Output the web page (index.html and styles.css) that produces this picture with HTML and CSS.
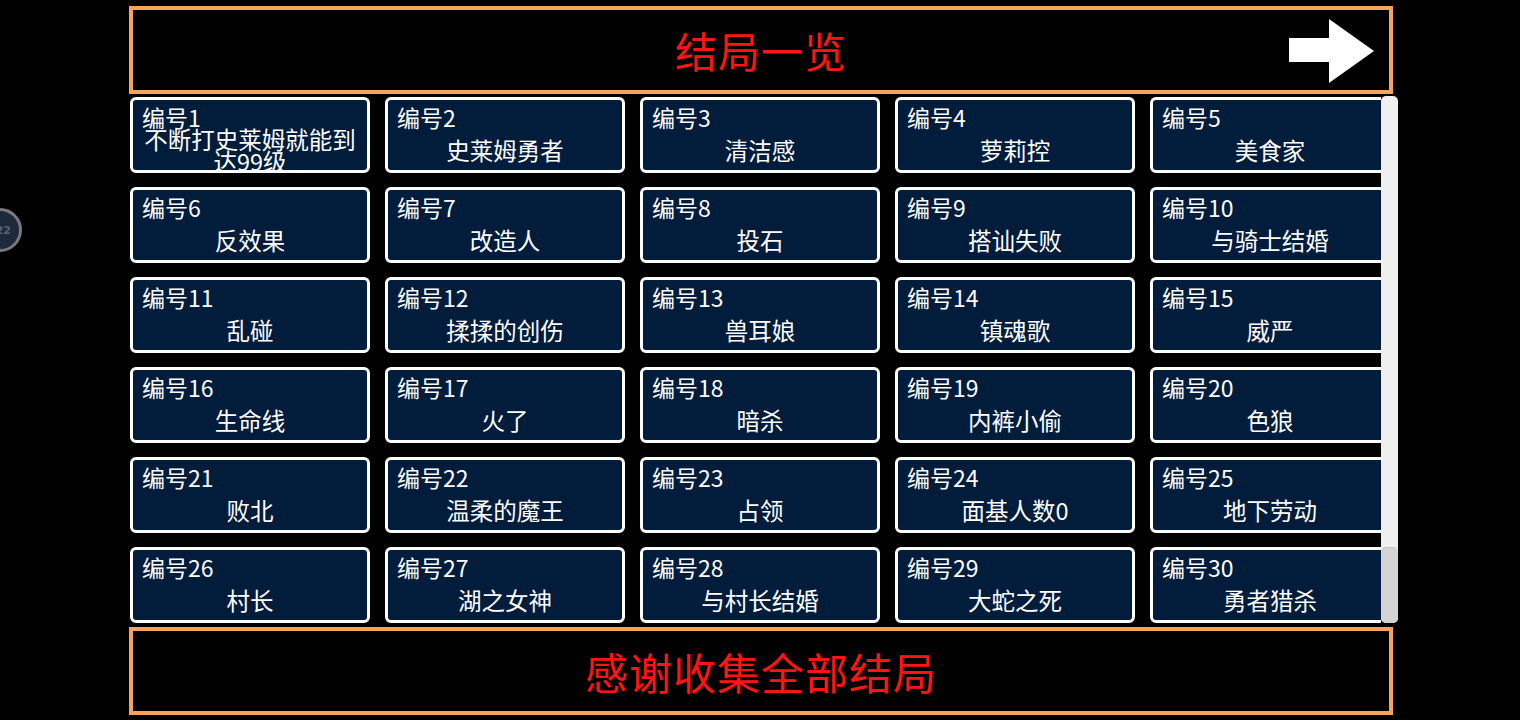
FILE: index.html
```html
<!DOCTYPE html>
<html lang="zh-CN">
<head>
<meta charset="utf-8">
<title>结局一览</title>
<link rel="stylesheet" href="styles.css">
</head>
<body>
<div class="bubble"><span>22</span></div>
<div class="screen">
  <header class="panel header">
    <h1 class="title">结局一览</h1>
    <svg class="next" width="86" height="66" viewBox="0 0 86 66" aria-hidden="true">
      <polygon points="0,19 40,19 40,0 85,32 40,64 40,43 0,43" fill="#ffffff"/>
    </svg>
  </header>
  <div class="list">
    <div class="viewport">
      <div class="grid">
        <div class="card"><div class="no">编号1</div><div class="name">不断打史莱姆就能到达99级</div></div>
        <div class="card"><div class="no">编号2</div><div class="name">史莱姆勇者</div></div>
        <div class="card"><div class="no">编号3</div><div class="name">清洁感</div></div>
        <div class="card"><div class="no">编号4</div><div class="name">萝莉控</div></div>
        <div class="card"><div class="no">编号5</div><div class="name">美食家</div></div>
        <div class="card"><div class="no">编号6</div><div class="name">反效果</div></div>
        <div class="card"><div class="no">编号7</div><div class="name">改造人</div></div>
        <div class="card"><div class="no">编号8</div><div class="name">投石</div></div>
        <div class="card"><div class="no">编号9</div><div class="name">搭讪失败</div></div>
        <div class="card"><div class="no">编号10</div><div class="name">与骑士结婚</div></div>
        <div class="card"><div class="no">编号11</div><div class="name">乱碰</div></div>
        <div class="card"><div class="no">编号12</div><div class="name">揉揉的创伤</div></div>
        <div class="card"><div class="no">编号13</div><div class="name">兽耳娘</div></div>
        <div class="card"><div class="no">编号14</div><div class="name">镇魂歌</div></div>
        <div class="card"><div class="no">编号15</div><div class="name">威严</div></div>
        <div class="card"><div class="no">编号16</div><div class="name">生命线</div></div>
        <div class="card"><div class="no">编号17</div><div class="name">火了</div></div>
        <div class="card"><div class="no">编号18</div><div class="name">暗杀</div></div>
        <div class="card"><div class="no">编号19</div><div class="name">内裤小偷</div></div>
        <div class="card"><div class="no">编号20</div><div class="name">色狼</div></div>
        <div class="card"><div class="no">编号21</div><div class="name">败北</div></div>
        <div class="card"><div class="no">编号22</div><div class="name">温柔的魔王</div></div>
        <div class="card"><div class="no">编号23</div><div class="name">占领</div></div>
        <div class="card"><div class="no">编号24</div><div class="name">面基人数0</div></div>
        <div class="card"><div class="no">编号25</div><div class="name">地下劳动</div></div>
        <div class="card"><div class="no">编号26</div><div class="name">村长</div></div>
        <div class="card"><div class="no">编号27</div><div class="name">湖之女神</div></div>
        <div class="card"><div class="no">编号28</div><div class="name">与村长结婚</div></div>
        <div class="card"><div class="no">编号29</div><div class="name">大蛇之死</div></div>
        <div class="card"><div class="no">编号30</div><div class="name">勇者猎杀</div></div>
      </div>
    </div>
    <div class="scrollbar"><div class="thumb"></div></div>
  </div>
  <footer class="panel footer">
    <p class="thanks">感谢收集全部结局</p>
  </footer>
</div>
</body>
</html>
```

FILE: styles.css
```css
html, body {
  margin: 0;
  padding: 0;
  background: #000;
  width: 1520px;
  height: 720px;
  overflow: hidden;
  font-family: "Noto Sans CJK SC", "Noto Sans", sans-serif;
}

.screen {
  width: 1269px;
  margin-left: 129px;
  padding-top: 6px;
  display: flex;
  flex-direction: column;
}

.panel {
  box-sizing: border-box;
  width: 1264px;
  border: 4px solid #f6a45c;
  background: #000;
  display: flex;
  align-items: center;
  justify-content: center;
}

.header {
  position: relative;
  height: 88px;
}

.title {
  margin: 0;
  color: #ff1414;
  font-size: 42px;
  font-weight: 400;
  line-height: 1;
  letter-spacing: 1px;
}

.next {
  position: absolute;
  left: 1156px;
  top: 9px;
}

.list {
  margin-top: 3px;
  margin-left: 1px;
  display: flex;
  height: 526px;
}

.viewport {
  width: 1251px;
  height: 526px;
  overflow: hidden;
}

.grid {
  display: grid;
  grid-template-columns: repeat(5, 240px);
  grid-auto-rows: 76px;
  column-gap: 15px;
  row-gap: 14px;
  width: 1260px;
}

.card {
  box-sizing: border-box;
  height: 76px;
  border: 3px solid #ffffff;
  border-radius: 6px;
  background: #021c3b;
  color: #fff;
  display: flex;
  flex-direction: column;
  overflow: hidden;
}

.no {
  padding: 5px 0 0 9px;
  font-size: 23px;
  line-height: 24px;
  height: 24px;
}

.name {
  flex: 1;
  min-height: 0;
  display: flex;
  align-items: center;
  justify-content: center;
  text-align: center;
  padding: 0 6px;
  font-size: 23.5px;
  line-height: 22px;
}

.scrollbar {
  width: 17px;
  height: 527px;
  margin-top: -1px;
  background: #efefef;
  border-radius: 5px;
  display: flex;
  flex-direction: column;
  justify-content: flex-end;
}

.thumb {
  height: 75px;
  background: #d4d4d4;
  border-radius: 5px;
  border-top: 1px solid #c4c4c4;
}

.footer {
  margin-top: 4px;
  height: 88px;
}

.thanks {
  margin: 0;
  color: #ff1414;
  font-size: 43px;
  line-height: 1;
  letter-spacing: 1px;
}

.bubble {
  position: absolute;
  left: -22px;
  top: 208px;
  width: 44px;
  height: 44px;
  box-sizing: border-box;
  border: 3px solid #7a7a7a;
  border-radius: 50%;
  background: #1c2a3c;
  display: flex;
  align-items: center;
  justify-content: flex-end;
  padding-right: 8px;
}

.bubble span {
  color: #5a6470;
  font-family: "DejaVu Sans", sans-serif;
  font-size: 11px;
  font-weight: bold;
}
```
